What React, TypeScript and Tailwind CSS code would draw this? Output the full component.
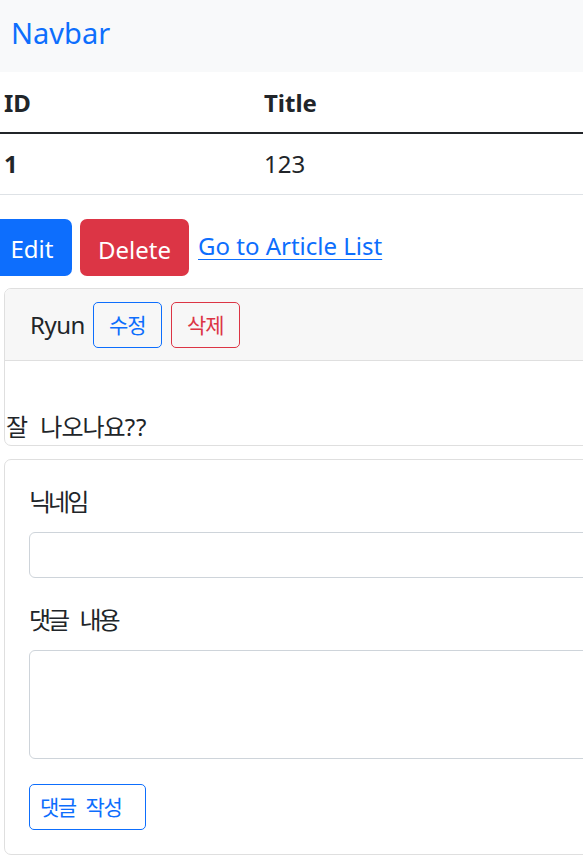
import React from "react";

const font = { fontFamily: '"Noto Sans", "Noto Sans CJK KR", sans-serif' };

export default function App() {
  return (
    <div
      className="w-full min-h-[861px] overflow-hidden bg-white text-[24px] leading-[36px] text-[#212529]"
      style={font}
    >
      {/* Navbar */}
      <nav className="h-[72px] bg-[#f8f9fa] flex items-center px-[11px] pb-[8px]">
        <a className="text-[29px] leading-[45px] text-[#0d6efd]">Navbar</a>
      </nav>

      <div className="pl-[4px] w-[760px]">
        {/* Table */}
        <div className="-ml-[12px]">
          <div className="grid grid-cols-[260px_1fr] border-b-2 border-[#212529] font-bold">
            <div className="px-[12px] h-[60px] flex items-center pt-[2px]">ID</div>
            <div className="px-[12px] h-[60px] flex items-center pt-[2px]">Title</div>
          </div>
          <div className="grid grid-cols-[260px_1fr] border-b border-[#dee2e6]">
            <div className="px-[12px] h-[60px] flex items-center font-bold">1</div>
            <div className="px-[12px] h-[60px] flex items-center">123</div>
          </div>
        </div>

        {/* Buttons */}
        <div className="-ml-[12px] mt-[24px] flex items-start gap-[8px]">
          <button className="w-[80px] h-[57px] rounded-[7px] bg-[#0d6efd] text-white flex items-center justify-center pt-[2px]">
            Edit
          </button>
          <button className="w-[109px] h-[57px] rounded-[7px] bg-[#dc3545] text-white flex items-center justify-center pt-[4px]">
            Delete
          </button>
          <a className="ml-[1px] mt-[9px] text-[#0d6efd] underline underline-offset-[4px] decoration-1">
            Go to Article List
          </a>
        </div>

        {/* Comment card */}
        <div className="mt-[12px] border border-[#dfdfdf] rounded-[7px] overflow-hidden">
          <div className="h-[72px] bg-[#f7f7f7] border-b border-[#dfdfdf] flex items-center pl-[25px]">
            <span className="tracking-[-0.5px]">Ryun</span>
            <button className="ml-[8px] w-[69px] h-[46px] rounded-[5px] border border-[#0d6efd] text-[#0d6efd] text-[21px] tracking-[-1px] flex items-center justify-center">
              수정
            </button>
            <button className="ml-[9px] w-[69px] h-[46px] rounded-[5px] border border-[#dc3545] text-[#dc3545] text-[21px] tracking-[-1px] flex items-center justify-center">
              삭제
            </button>
          </div>
          <div className="pt-[48px] pl-[1px]">
            <p>
              <span className="tracking-[-1px] [word-spacing:8px]">잘 나오나요</span>
              <span className="tracking-[1px]">??</span>
            </p>
          </div>
        </div>

        {/* Form card */}
        <div className="mt-[13px] border border-[#dfdfdf] rounded-[7px] p-[24px]">
          <label className="block mb-[12px] tracking-[-3px] [word-spacing:9px]">닉네임</label>
          <input className="block w-full h-[46px] border border-[#ced4da] rounded-[6px] mb-[24px] outline-none" />
          <label className="block mb-[12px] tracking-[-3px] [word-spacing:9px]">댓글 내용</label>
          <textarea className="block w-full h-[109px] border border-[#ced4da] rounded-[6px] mb-[25px] outline-none resize-none" />
          <button className="w-[117px] h-[46px] pl-[10px] rounded-[5px] border border-[#0d6efd] text-[#0d6efd] text-[21px] tracking-[-1.5px] [word-spacing:6px] flex items-center justify-start">
            댓글 작성
          </button>
        </div>
      </div>
    </div>
  );
}
